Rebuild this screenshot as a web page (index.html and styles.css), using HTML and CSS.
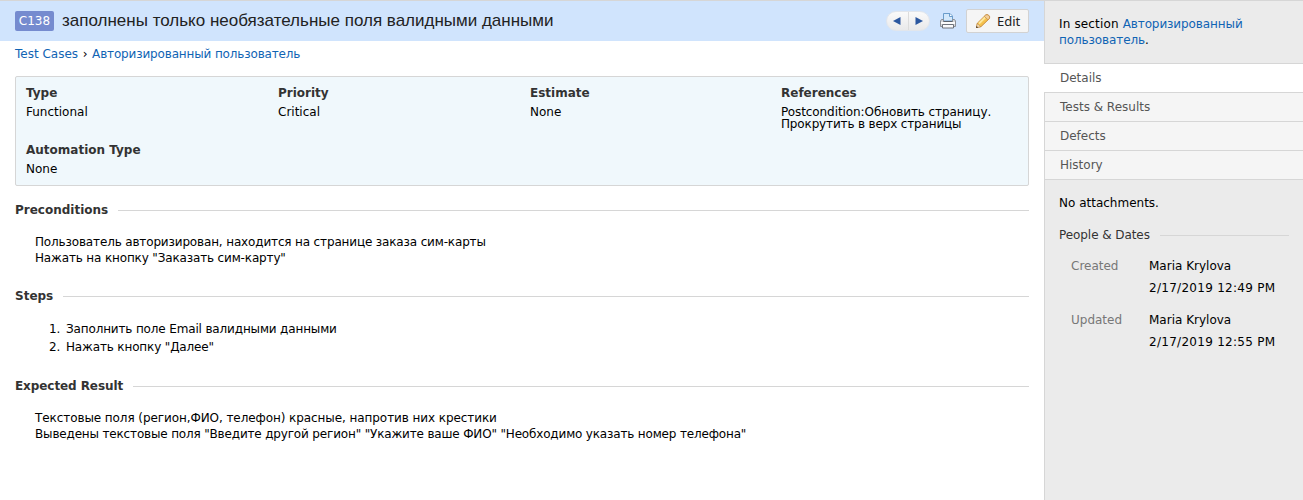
FILE: index.html
```html
<!DOCTYPE html>
<html lang="ru">
<head>
<meta charset="utf-8">
<title>C138</title>
<link rel="stylesheet" href="styles.css">
</head>
<body>
<div class="page">
  <main class="main">
    <header class="header">
      <span class="badge">C138</span>
      <h1 class="title">заполнены только необязательные поля валидными данными</h1>
      <div class="pager">
        <a class="pager-btn"><svg width="8" height="8" viewBox="0 0 8 8"><path d="M7.5 0v8L0 4z" fill="#2b579f"/></svg></a>
        <a class="pager-btn next"><svg width="8" height="8" viewBox="0 0 8 8"><path d="M.5 0v8L8 4z" fill="#2b579f"/></svg></a>
      </div>
      <svg class="print" width="16" height="16" viewBox="0 0 16 16">
        <path d="M3.500 8V.5h6.500l2.500 2.500V8z" fill="#d3e8fb" stroke="#6a9ccb"/>
        <path d="M9.500 1v2.500h3" fill="#fff" stroke="#6a9ccb"/>
        <path d="M1.500 6.500h2v2h9v-2h2l1 1.500v5.500H.5V8z" fill="#d4d6da" stroke="#8c9097"/>
        <path d="M3.500 8.500h9" stroke="#5c626b"/>
        <path d="M1 10h14" stroke="#fbfbfb" stroke-width="2"/>
        <path d="M2.500 11.500h11v3.500h-11z" fill="#f9fafc" stroke="#6e737b"/>
      </svg>
      <a class="edit">
        <svg width="16" height="16" viewBox="0 0 16 16">
          <path d="M1.500 14.500l.8-4.200L10.500 2.200q1.500-1.200 3.200.2t.6 3.200L6 13.600z" fill="#f5c14c" stroke="#c98a35"/>
          <path d="M4 10.500l7-7" stroke="#fde79c" stroke-width="2"/>
          <path d="M10.500 2.200q1.500-1.200 3.200.2t.6 3.200l-1.300 1.200-3.700-3.500z" fill="#f3cf9b" stroke="#c6914c" stroke-width=".8"/>
          <path d="M1.500 14.500l.8-3.800 3.200 3z" fill="#f8e6c8" stroke="#b9884e" stroke-width=".6"/>
          <path d="M1 15l.5-2 1.700 1.500z" fill="#4a3b2a"/>
        </svg>
        <span>Edit</span>
      </a>
    </header>
    <nav class="crumbs"><a>Test Cases</a><span class="sep">›</span><a class="tight">Авторизированный пользователь</a></nav>
    <section class="info">
      <div class="field"><b>Type</b><span>Functional</span></div>
      <div class="field"><b>Priority</b><span>Critical</span></div>
      <div class="field"><b>Estimate</b><span>None</span></div>
      <div class="field"><b>References</b><span class="snug">Postcondition:Обновить страницу.</span><span class="cont tight">Прокрутить в верх страницы</span></div>
      <div class="field"><b>Automation Type</b><span>None</span></div>
    </section>
    <h2 class="heading">Preconditions</h2>
    <div class="text"><p class="tight">Пользователь авторизирован, находится на странице заказа сим-карты</p><p class="tight">Нажать на кнопку "Заказать сим-карту"</p></div>
    <h2 class="heading">Steps</h2>
    <ol class="steps tight"><li>Заполнить поле Email валидными данными</li><li>Нажать кнопку "Далее"</li></ol>
    <h2 class="heading snug">Expected Result</h2>
    <div class="text"><p class="snug">Текстовые поля (регион,ФИО, телефон) красные, напротив них крестики</p><p class="tight wide-line">Выведены текстовые поля "Введите другой регион" "Укажите ваше ФИО" "Необходимо указать номер телефона"</p></div>
  </main>
  <aside class="side">
    <p class="section">In section <a class="section-link">Авторизированный<br>пользователь</a>.</p>
    <nav class="tabs">
      <a class="tab active">Details</a>
      <a class="tab">Tests &amp; Results</a>
      <a class="tab">Defects</a>
      <a class="tab">History</a>
    </nav>
    <p class="attach">No attachments.</p>
    <h3 class="people">People &amp; Dates</h3>
    <dl class="dates">
      <dt>Created</dt><dd>Maria Krylova<br><span class="stamp">2/17/2019 12:49 PM</span></dd>
      <dt>Updated</dt><dd>Maria Krylova<br><span class="stamp">2/17/2019 12:55 PM</span></dd>
    </dl>
  </aside>
</div>
</body>
</html>
```
FILE: styles.css
```css
* { box-sizing: border-box; margin: 0; padding: 0; }
body {
  font: 12px/16px "DejaVu Sans", sans-serif;
  color: #000;
  background: #fff;
  overflow: hidden;
}
a { color: #1064b4; }
.tight { letter-spacing: -.15px; }
.wide-line { letter-spacing: -.165px; }
.snug { letter-spacing: -.08px; }
.stamp { letter-spacing: .28px; }
.page { display: flex; height: 500px; border-top: 1px solid #d6d6d6; white-space: nowrap; }
.main { width: 1044px; }
.header { display: flex; align-items: center; height: 40px; padding: 0 15px; background: #d0e4fd; }
.badge {
  width: 39px; height: 20px; border-radius: 2px; background: #758bcf;
  color: #fff; line-height: 20px; text-align: center;
}
.title { flex: 1; margin-left: 8px; font: 17px/20px "Liberation Sans", Arial, sans-serif; color: #222; }
.pager { display: flex; width: 44px; height: 20px; border-radius: 10px; background: linear-gradient(#fafafa, #e9e9ea); border: 1px solid #e2e6ec; }
.pager-btn { flex: 1; display: flex; align-items: center; justify-content: center; }
.next { border-left: 1px solid #dcdcdc; }
.print { margin-left: 10px; }
.edit {
  display: flex; align-items: center; width: 63px; height: 24px; margin-left: 10px; padding-left: 8px;
  background: #f5f5f5; border: 1px solid #d2d2d2; border-radius: 2px; color: #222;
}
.edit span { margin-left: 6px; padding-bottom: 1px; font: 13px/16px "Noto Sans", sans-serif; }
.crumbs { display: flex; padding: 5px 15px 0; }
.sep { width: 14px; text-align: center; }
.info {
  display: grid; grid-template-columns: 252px 252px 251px 1fr; grid-template-rows: 57px 1fr;
  width: 1014px; height: 110px; margin: 14px 0 0 15px; padding: 8px 10px 0;
  background: #f0f8fc; border: 1px solid #d6d6d6; border-radius: 2px;
}
.field b { display: block; color: #333; line-height: 16px; }
.field span { display: block; margin-top: 5px; line-height: 12px; }
.field .cont { margin-top: 0; }
.heading, .people { display: flex; align-items: center; font-size: 12px; line-height: 16px; color: #333; }
.heading { width: 1014px; margin-left: 15px; }
.heading::after, .people::after { content: ""; flex: 1; height: 1px; margin-left: 10px; background: #d6d6d6; }
.info + .heading { margin-top: 16px; }
.text { margin: 16px 0 22px 35px; }
.steps { margin: 16px 0 22px 66px; line-height: 18px; }
.steps li::marker { content: counter(list-item) ".\2009\00a0"; }
.side { width: 259px; background: #ebebeb; border-left: 1px solid #d6d6d6; }
.section { height: 62px; padding: 15px 14px 0; letter-spacing: .15px; }
.section-link { letter-spacing: -.1px; }
.tab { display: block; height: 29px; padding-left: 15px; line-height: 28px; color: #555; background: #f5f5f5; border-top: 1px solid #d6d6d6; }
.tab:last-child { height: 30px; border-bottom: 1px solid #d6d6d6; }
.active { background: #fff; margin-left: -1px; padding-left: 16px; }
.attach { margin: 15px 14px 16px; }
.people { margin: 0 14px; font-weight: normal; letter-spacing: -.07px; }
.dates { display: grid; grid-template-columns: 78px 1fr; row-gap: 10px; margin: 12px 0 0 26px; line-height: 22px; }
.dates dt { color: #777; }
```
